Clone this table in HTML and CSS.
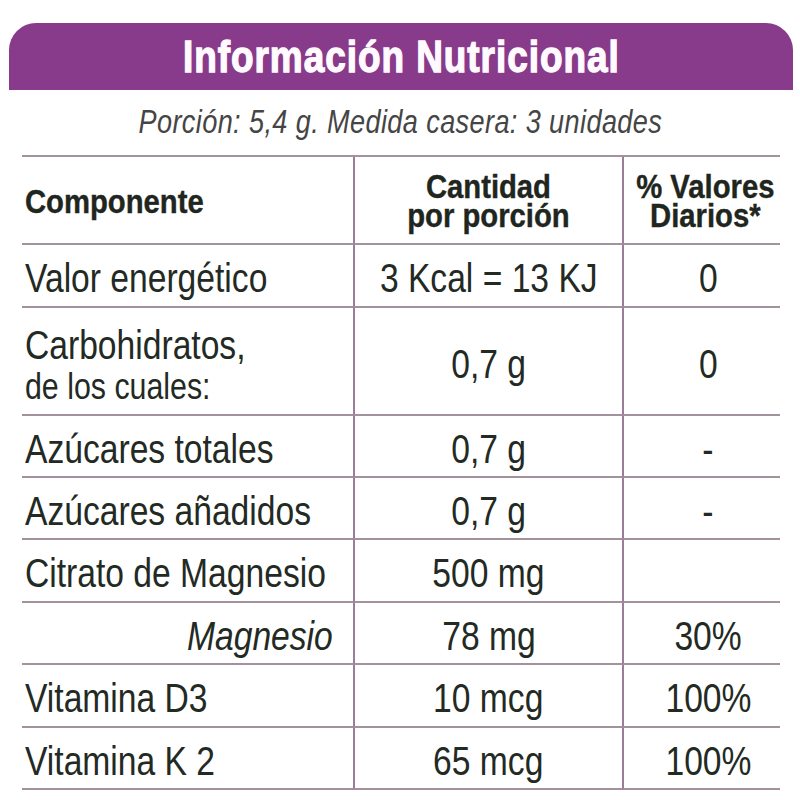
FILE: index.html
```html
<!DOCTYPE html>
<html lang="es">
<head>
<meta charset="utf-8">
<title>Información Nutricional</title>
<link rel="stylesheet" href="styles.css">
</head>
<body>
<div class="label">
  <div class="band"><h1 class="title"><span class="n mid">Información Nutricional</span></h1></div>
  <p class="portion"><span class="n mid">Porción: 5,4 g. Medida casera: 3 unidades</span></p>
  <div class="table">
    <div class="cell c1 head"><span class="n">Componente</span></div>
    <div class="cell c2 head"><span class="n mid stack"><span>Cantidad</span><span>por porción</span></span></div>
    <div class="cell c3 head"><span class="n mid stack"><span>% Valores</span><span>Diarios*</span></span></div>

    <div class="cell c1"><span class="n">Valor energético</span></div>
    <div class="cell c2"><span class="n mid">3 Kcal = 13 KJ</span></div>
    <div class="cell c3"><span class="n mid">0</span></div>

    <div class="cell c1 carbs"><span class="two"><span class="n l1">Carbohidratos,</span><span class="n l2">de los cuales:</span></span></div>
    <div class="cell c2"><span class="n mid">0,7 g</span></div>
    <div class="cell c3"><span class="n mid">0</span></div>

    <div class="cell c1"><span class="n">Azúcares totales</span></div>
    <div class="cell c2"><span class="n mid">0,7 g</span></div>
    <div class="cell c3"><span class="n mid">-</span></div>

    <div class="cell c1"><span class="n">Azúcares añadidos</span></div>
    <div class="cell c2"><span class="n mid">0,7 g</span></div>
    <div class="cell c3"><span class="n mid">-</span></div>

    <div class="cell c1"><span class="n">Citrato de Magnesio</span></div>
    <div class="cell c2"><span class="n mid">500 mg</span></div>
    <div class="cell c3"></div>

    <div class="cell c1 sub"><span class="n end">Magnesio</span></div>
    <div class="cell c2"><span class="n mid">78 mg</span></div>
    <div class="cell c3"><span class="n mid">30%</span></div>

    <div class="cell c1"><span class="n">Vitamina D3</span></div>
    <div class="cell c2"><span class="n mid">10 mcg</span></div>
    <div class="cell c3"><span class="n mid">100%</span></div>

    <div class="cell c1"><span class="n">Vitamina K 2</span></div>
    <div class="cell c2"><span class="n mid">65 mcg</span></div>
    <div class="cell c3"><span class="n mid">100%</span></div>
  </div>
</div>
</body>
</html>
```

FILE: styles.css
```css
* { box-sizing: border-box; }

html, body {
  margin: 0;
  padding: 0;
  background: #ffffff;
}

body {
  font-family: "Liberation Sans", Arial, sans-serif;
  color: #232a24;
}

/* condensed text: Arial metrics squeezed to a narrow face */
.n {
  display: inline-block;
  white-space: nowrap;
  transform: scaleX(0.82);
  transform-origin: left center;
}

.n.mid { transform-origin: center center; }
.n.end { transform-origin: right center; }

.label {
  width: 800px;
  height: 800px;
  padding-top: 23px;
}

.band {
  margin-left: 9px;
  width: 784px;
  height: 67px;
  background: #883b8b;
  border-radius: 27px 27px 0 0;
  display: flex;
  justify-content: center;
}

.title {
  margin: 0;
  font-size: 45px;
  line-height: 67px;
  font-weight: 700;
  letter-spacing: 1.2px;
  color: #fffafd;
}

.title .n {
  -webkit-text-stroke: 1.4px #fffafd;
}

.portion {
  margin: 0;
  height: 65px;
  padding-top: 12px;
  font-size: 33px;
  line-height: 40px;
  font-style: italic;
  letter-spacing: 0.5px;
  text-align: center;
  color: #454545;
}

.table {
  margin-left: 22px;
  width: 758px;
  border-top: 2px solid #a3929e;
  display: grid;
  grid-template-columns: 331px 269px 158px;
  grid-template-rows: 88px 63px 108px 62px 62px 63px 62px 63px 62px;
}

.cell {
  display: flex;
  align-items: center;
  border-bottom: 2px solid #a3929e;
  font-size: 41px;
  line-height: 1;
  padding-top: 6px;
}

.c1 {
  padding-left: 3px;
}

.c2, .c3 {
  justify-content: center;
  text-align: center;
  border-left: 2px solid #9b7d99;
}

.c3 {
  padding-left: 12px;
}

.head {
  font-size: 34px;
  font-weight: 700;
  line-height: 29px;
  padding-top: 2px;
  color: #1f2620;
}

.head .n {
  transform: scaleX(0.86);
  -webkit-text-stroke: 0.4px #1f2620;
}

.stack {
  display: inline-flex;
  flex-direction: column;
  align-items: center;
}

.stack span {
  display: block;
  height: 29px;
}

.c3.head {
  padding-left: 6px;
}

.carbs {
  padding-top: 10px;
}

.two {
  display: flex;
  flex-direction: column;
  align-items: flex-start;
}

.l1 {
  font-size: 41px;
  line-height: 42px;
}

.l2 {
  font-size: 37px;
  line-height: 42px;
}

.sub {
  justify-content: flex-end;
  padding-right: 20px;
  font-style: italic;
}
```
